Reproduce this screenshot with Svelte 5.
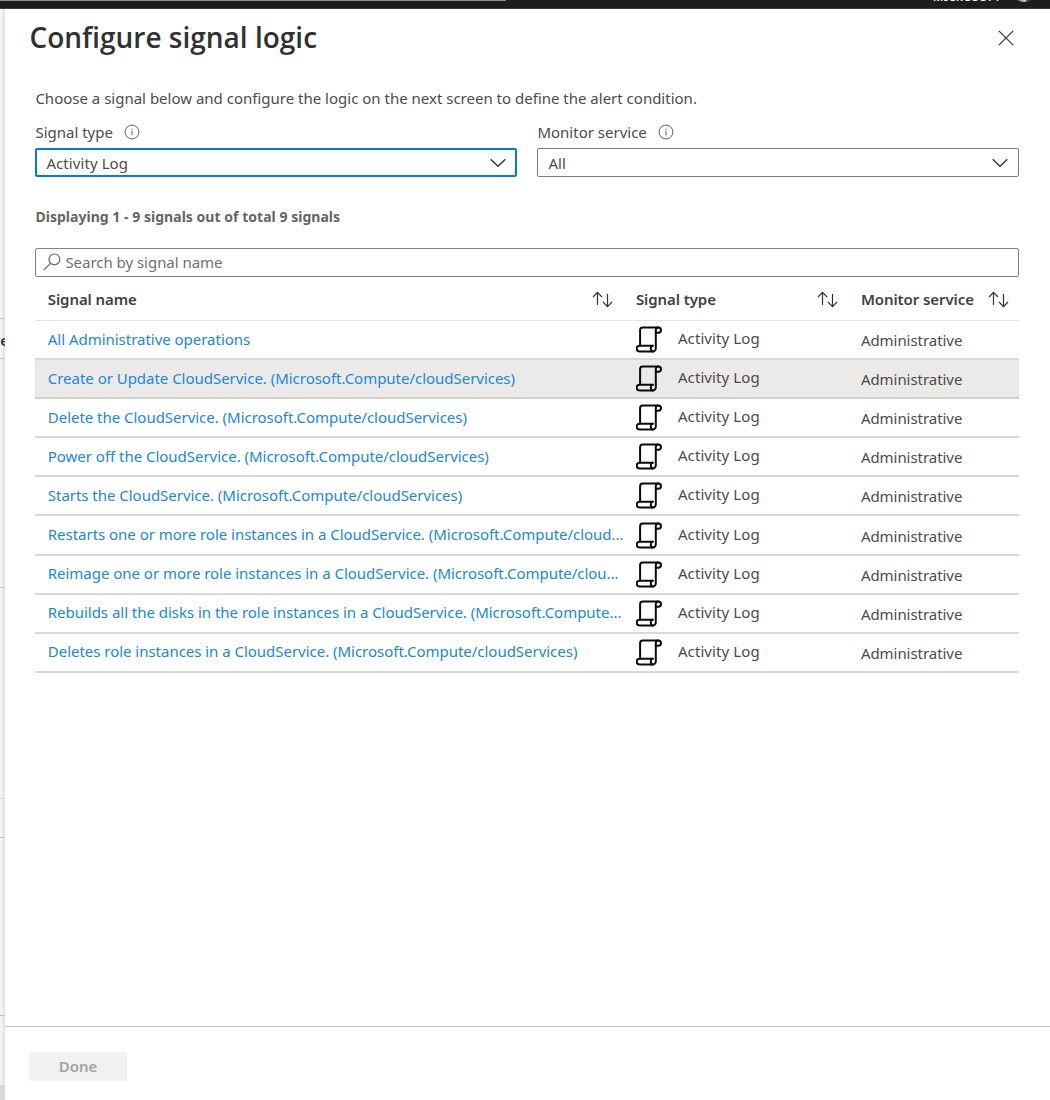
<script>
  const signals = [
    'All Administrative operations',
    'Create or Update CloudService. (Microsoft.Compute/cloudServices)',
    'Delete the CloudService. (Microsoft.Compute/cloudServices)',
    'Power off the CloudService. (Microsoft.Compute/cloudServices)',
    'Starts the CloudService. (Microsoft.Compute/cloudServices)',
    'Restarts one or more role instances in a CloudService. (Microsoft.Compute/cloud...',
    'Reimage one or more role instances in a CloudService. (Microsoft.Compute/clou...',
    'Rebuilds all the disks in the role instances in a CloudService. (Microsoft.Compute...',
    'Deletes role instances in a CloudService. (Microsoft.Compute/cloudServices)'
  ];
  const highlighted = 1;
</script>

{#snippet info()}
  <svg class="info" viewBox="0 0 16 16" width="16" height="16">
    <circle cx="8" cy="8" r="6.9" />
    <path d="M8 7v4.3M8 4.6v1.2" />
  </svg>
{/snippet}

{#snippet chevron()}
  <svg class="chevron" viewBox="0 0 16 10" width="16" height="10"><path d="M.7 1.2 8 8.3l7.3-7.1" /></svg>
{/snippet}

{#snippet sort()}
  <svg class="sort" viewBox="0 0 21 17" width="21" height="17">
    <path d="M5.5 14V1.6M1 6l4.5-4.6L10 6M15.5 3v12.4M11 11l4.5 4.6L20 11" />
  </svg>
{/snippet}

{#snippet scroll()}
  <svg class="scroll" viewBox="0 0 26 27" width="26" height="27">
    <path d="M4.1 19.5V4A2.6 2.6 0 0 1 6.7 1.5H22.4a2.5 2.5 0 0 1 0 5.2H19.8" />
    <path d="M22.2 1.5a2.5 2.5 0 0 0-2.4 2.6V22.4a3.1 3.1 0 0 1-3.1 3.1H3.6a2.9 2.9 0 0 1 0-5.8H16.9" />
    <path d="M16.4 19.7a2.5 2.5 0 0 0-1.6 2.6c0 1.9.9 3.2 2.2 3.2" />
  </svg>
{/snippet}

<div class="screen">
  <header class="topbar">
    <span class="topline"></span>
    <span class="account">MICROSOFT</span>
    <span class="avatar"></span>
  </header>
  <div class="body">
    <aside class="behind">
      <div class="b1"></div>
      <div class="b2"><span>ve</span></div>
      <div class="b3"></div>
      <div class="b4"></div>
      <div class="b5"></div>
      <div class="b6"></div>
      <div class="b7"></div>
      <div class="b8"></div>
    </aside>
    <section class="panel">
      <div class="head">
        <h1>Configure signal logic</h1>
        <svg class="close" viewBox="0 0 16 16" width="16" height="16"><path d="M.8.8l14.4 14.4M15.2.8.8 15.2" /></svg>
      </div>
      <div class="content">
        <p class="intro">Choose a signal below and configure the logic on the next screen to define the alert condition.</p>
        <div class="filters">
          <div class="field">
            <div class="label">Signal type {@render info()}</div>
            <div class="select focus"><span>Activity Log</span>{@render chevron()}</div>
          </div>
          <div class="field">
            <div class="label">Monitor service {@render info()}</div>
            <div class="select"><span>All</span>{@render chevron()}</div>
          </div>
        </div>
        <p class="count">Displaying 1 - 9 signals out of total 9 signals</p>
        <div class="search">
          <svg viewBox="0 0 18 18" width="18" height="18"><circle cx="11.4" cy="6.4" r="5.4" /><path d="M7.5 10.4.8 17" /></svg>
          <span>Search by signal name</span>
        </div>
        <div class="row thead">
          <div class="name">Signal name {@render sort()}</div>
          <div class="type">Signal type {@render sort()}</div>
          <div class="service">Monitor service {@render sort()}</div>
        </div>
        {#each signals as signal, i}
          <div class="row" class:hot={i === highlighted}>
            <div class="name"><span class="link">{signal}</span></div>
            <div class="type">{@render scroll()}<span>Activity Log</span></div>
            <div class="service"><span>Administrative</span></div>
          </div>
        {/each}
      </div>
      <footer><button>Done</button></footer>
    </section>
  </div>
</div>

<style>
  .screen {
    width: 1050px;
    height: 1100px;
    display: flex;
    flex-direction: column;
    overflow: hidden;
    background: #fff;
    color: #4c4b49;
    font: 15px/20px 'Noto Sans', 'Open Sans', sans-serif;
  }
  .screen *, .screen { box-sizing: border-box; }
  svg { flex: none; fill: none; stroke: #333; }
  p, h1 { margin: 0; }

  .topbar {
    position: relative;
    height: 9px;
    flex: none;
    background: #1c1d1c;
    border-bottom: 1px solid #3a3a3a;
    overflow: hidden;
  }
  .topline { position: absolute; left: 0; top: 0; width: 506px; height: 1px; background: #8d918d; }
  .account {
    position: absolute;
    left: 933px;
    top: -10px;
    color: #fff;
    font-size: 11px;
    line-height: 14px;
    font-weight: 600;
    letter-spacing: .45px;
  }
  .avatar {
    position: absolute;
    left: 1011px;
    top: -24px;
    width: 26px;
    height: 26px;
    border-radius: 50%;
    background: linear-gradient(90deg, #777 30%, #d8d4d4 52%, #6d3838 64%);
  }

  .body { flex: 1; display: flex; min-height: 0; }
  .behind {
    width: 5px;
    flex: none;
    overflow: hidden;
    background: linear-gradient(90deg, #f6f6f6, #ececec 60%, #dedede);
  }
  .behind div { border-bottom: 1px solid #c0c0c0; }
  .b1 { height: 310px; }
  .b2 { height: 40px; display: flex; justify-content: flex-end; align-items: center; }
  .b2 span { font-weight: 600; color: #333; margin-right: -4px; padding-top: 2px; }
  .b3 { height: 229px; }
  .behind .b4 { height: 211px; border-color: #d6d6d6; }
  .b5 { height: 39px; }
  .b6 { height: 178px; }
  .behind .b7 { height: 69px; border: 0; }
  .behind .b8 { height: 15px; border: 0; background: #d9d9d9; }

  .panel { flex: 1; display: flex; flex-direction: column; min-width: 0; }
  .head {
    display: flex;
    justify-content: space-between;
    align-items: center;
    height: 58px;
    padding: 0 36px 0 24.5px;
  }
  h1 {
    font: 600 28px/40px 'Open Sans', 'Noto Sans', sans-serif;
    color: #323130;
    padding-bottom: 2px;
  }
  .close { stroke-width: 1.2; }
  .content { flex: 1; padding: 0 30.6px 0 30.4px; }
  .intro { height: 20px; margin-top: 21px; }
  .filters { display: flex; gap: 20px; margin-top: 14px; }
  .field { flex: 1; }
  .label { display: flex; align-items: center; gap: 11px; height: 26px; padding-bottom: 6px; }
  .info { stroke: #605e5c; stroke-width: 1; }
  .select {
    display: flex;
    justify-content: space-between;
    align-items: center;
    height: 29px;
    border: 1px solid #7f7d7b;
    border-radius: 2px;
    padding: 0 10px 0 10px;
  }
  .select.focus { border: 2px solid #0a78d6; padding: 0 9px 0 9px; }
  .select span { letter-spacing: .08px; }
  .chevron { stroke-width: 1.4; }
  .count {
    margin-top: 30px;
    font-size: 14px;
    font-weight: 700;
    letter-spacing: .03px;
    color: #666462;
  }
  .search {
    display: flex;
    align-items: center;
    gap: 4px;
    margin-top: 21px;
    height: 29px;
    border: 1px solid #858381;
    border-radius: 2px;
    padding: 0 7px 1px;
    color: #72706e;
  }
  .search svg { stroke: #666; stroke-width: 1.2; margin-top: -1px; }
  .search span { letter-spacing: -.03px; }

  .row {
    display: grid;
    grid-template-columns: 600.5px 225px 1fr;
    height: 39.1px;
    border-bottom: 2px solid #d8d8d8;
    align-items: center;
  }
  .row.hot { background: #ebeae9; border-color: #d0d0d0; }
  .row > div { display: flex; align-items: center; white-space: nowrap; }
  .thead {
    height: 44px;
    border-bottom: 1px solid #e4e4e4;
    font-weight: 600;
    color: #42413f;
    letter-spacing: -.08px;
  }
  .thead > div { justify-content: space-between; }
  .row .name { padding-left: 12.4px; }
  .thead .name, .thead .type { padding-right: 22.5px; }
  .thead .service { padding-right: 10px; }
  .sort { stroke-width: 1.2; margin-top: 1px; }
  .link { color: #2087d8; letter-spacing: -.025px; padding-bottom: 2px; }
  .row:not(.thead) .service { padding-top: 1px; letter-spacing: -.05px; }
  .type span { margin-left: 16px; padding-bottom: 3px; letter-spacing: .1px; }
  .scroll { stroke: #0b0b0b; stroke-width: 2; stroke-linejoin: round; stroke-linecap: round; }

  footer {
    height: 74px;
    flex: none;
    border-top: 1px solid #c4c3c2;
    padding: 25px 24px;
  }
  button {
    display: block;
    width: 98px;
    height: 29px;
    border: 0;
    border-radius: 2px;
    padding: 0 0 2px;
    background: #f2f1ef;
    color: #a5a3a1;
    font: 600 15px/20px 'Noto Sans', 'Open Sans', sans-serif;
  }
</style>
